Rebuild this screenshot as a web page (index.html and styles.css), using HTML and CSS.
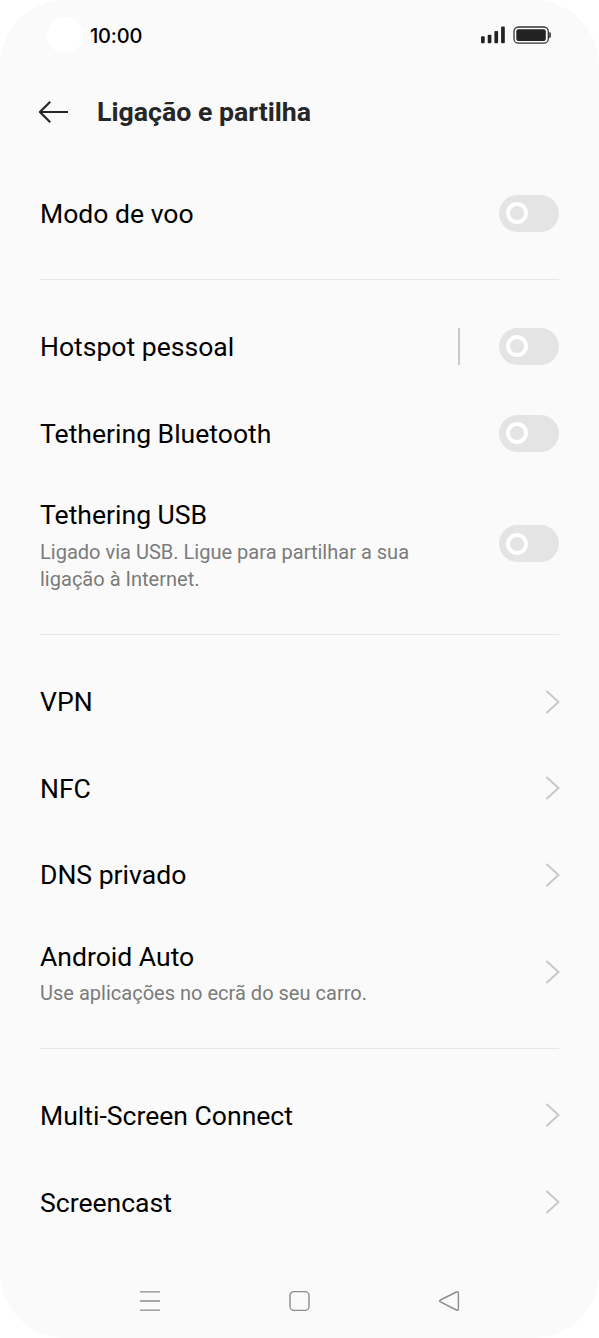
FILE: index.html
```html
<!DOCTYPE html>
<html lang="pt">
<head>
<meta charset="utf-8">
<title>Ligação e partilha</title>
<link rel="stylesheet" href="styles.css">
</head>
<body>
<div class="screen">
  <div class="status">
    <span class="camera"></span>
    <span class="time">10:00</span>
    <svg class="status-icons" width="72" height="20" viewBox="0 0 72 20">
      <g fill="#222"><rect x="1" y="10.3" width="3.7" height="7" rx="1"/><rect x="7.7" y="8.8" width="3.7" height="8.5" rx="1"/><rect x="14.4" y="5" width="3.7" height="12.3" rx="1"/><rect x="21.1" y="0.5" width="3.7" height="16.8" rx="1"/><rect x="36.3" y="3.2" width="29.5" height="11.8" rx="2"/></g>
      <rect x="34" y="1" width="34.3" height="16.2" rx="4.5" fill="none" stroke="#333" stroke-width="1.3"/>
      <path d="M69 6.2h.6q1.4 0 1.4 1.4v3q0 1.4-1.4 1.4H69z" fill="#555"/>
    </svg>
  </div>
  <header class="header">
    <svg class="back" width="32" height="24" viewBox="0 0 32 24"><path d="M31 12H3M13.2 1.8 2.9 12l10.3 10.2"/></svg>
    <h1 class="title">Ligação e partilha</h1>
  </header>
  <main>
    <section class="group">
      <div class="row"><span class="label">Modo de voo</span><span class="switch"></span></div>
    </section>
    <section class="group">
      <div class="row"><span class="label">Hotspot pessoal</span><span class="bar"></span><span class="switch"></span></div>
      <div class="row"><span class="label">Tethering Bluetooth</span><span class="switch"></span></div>
      <div class="row row-usb"><div class="text"><span class="label">Tethering USB</span><span class="note">Ligado via USB. Ligue para partilhar a sua<br>ligação à Internet.</span></div><span class="switch"></span></div>
    </section>
    <section class="group group-links">
      <div class="row"><span class="label">VPN</span><svg class="chevron" viewBox="0 0 14 24"><path d="M1 1.5 12.5 12 1 22.5"/></svg></div>
      <div class="row"><span class="label">NFC</span><svg class="chevron" viewBox="0 0 14 24"><path d="M1 1.5 12.5 12 1 22.5"/></svg></div>
      <div class="row"><span class="label">DNS privado</span><svg class="chevron" viewBox="0 0 14 24"><path d="M1 1.5 12.5 12 1 22.5"/></svg></div>
      <div class="row row-auto"><div class="text"><span class="label">Android Auto</span><span class="note">Use aplicações no ecrã do seu carro.</span></div><svg class="chevron" viewBox="0 0 14 24"><path d="M1 1.5 12.5 12 1 22.5"/></svg></div>
    </section>
    <section class="group group-links">
      <div class="row"><span class="label">Multi-Screen Connect</span><svg class="chevron" viewBox="0 0 14 24"><path d="M1 1.5 12.5 12 1 22.5"/></svg></div>
      <div class="row"><span class="label">Screencast</span><svg class="chevron" viewBox="0 0 14 24"><path d="M1 1.5 12.5 12 1 22.5"/></svg></div>
    </section>
  </main>
  <nav class="nav">
    <svg width="22" height="22" viewBox="0 0 22 22"><path d="M1 1.9h20M1 11h20M1 20.1h20"/></svg>
    <svg width="22" height="22" viewBox="0 0 22 22"><rect x="1" y="1.6" width="19" height="18.8" rx="4"/></svg>
    <svg width="22" height="22" viewBox="0 0 22 22"><path d="M2.4 10 18.4 2q2-.8 2 1v16q0 1.8-2 1l-16-8q-1.6-1 0-2z"/></svg>
  </nav>
</div>
</body>
</html>
```
FILE: styles.css
```css
*, *::before { box-sizing: border-box; }
body { margin: 0; background: #fff; font-family: Roboto, sans-serif; }
.screen {
  width: 599px;
  height: 1338px;
  display: flex;
  flex-direction: column;
  background: #fafafa;
  border-radius: 66px;
  overflow: hidden;
}
.status { display: flex; align-items: center; height: 70px; padding: 0 47px; }
.camera { width: 36px; height: 36px; border-radius: 50%; background: #fff; }
.time { margin-left: 7px; padding-top: 2px; font: 500 20px/24px Inter, sans-serif; letter-spacing: -0.2px; color: #000; }
.status-icons { margin: 2px 0 0 auto; }
.header { display: flex; align-items: center; gap: 28px; height: 84px; padding-left: 37px; }
.back { margin-bottom: 1px; fill: none; stroke: #262626; stroke-width: 2.2; stroke-linejoin: round; }
.title { margin: 0; font-size: 26.7px; line-height: 32px; font-weight: 700; color: #262626; }
main { padding-top: 16px; }
.group { margin: 0 40px; padding-bottom: 22.6px; }
.group + .group { border-top: 1px solid #e6e6e6; padding-top: 23px; }
.group + .group-links { padding-top: 23.5px; padding-bottom: 22.1px; }
.row { display: flex; align-items: center; height: 86.6px; }
.row-usb { height: 135px; }
.row-auto { height: 107.3px; }
.label { font-size: 26.55px; line-height: 34px; color: #000; padding-top: 1px; white-space: nowrap; }
.text { display: flex; flex-direction: column; gap: 7px; padding-top: 3px; }
.note { font-size: 20.05px; line-height: 27px; color: #7b7b7b; white-space: nowrap; }
.row-auto .text { gap: 6px; padding-top: 2px; }
.switch { width: 60px; height: 37px; margin-left: auto; padding: 7.5px 7px; border-radius: 19px; background: #e4e4e4; }
.switch::before { content: ""; display: block; width: 22px; height: 22px; border: 4.5px solid #fff; border-radius: 50%; }
.bar { width: 2px; height: 37px; margin-left: auto; background: #cacaca; }
.bar + .switch { margin-left: 39px; }
.chevron { width: 14px; height: 24px; margin: 0 -1px 0 auto; fill: none; stroke: #c8c8c8; stroke-width: 2; stroke-linecap: round; stroke-linejoin: round; }
.nav { display: flex; justify-content: space-between; margin-top: auto; padding: 0 139px 26px 139px; }
.nav svg { fill: none; stroke: #8c8c8c; stroke-width: 1.4; }
```
